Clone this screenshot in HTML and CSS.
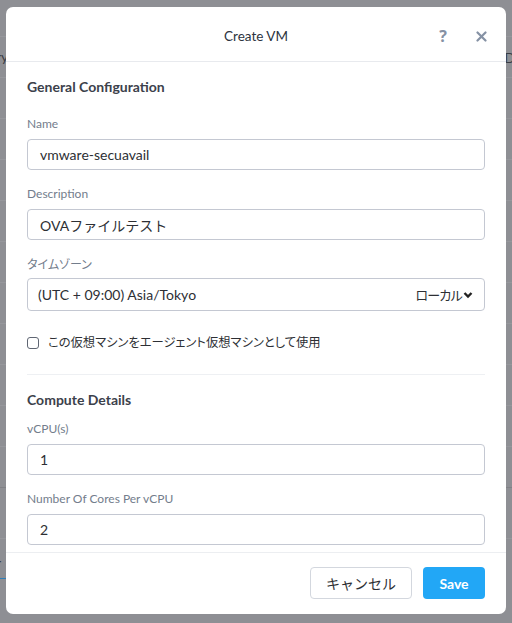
FILE: index.html
```html
<!DOCTYPE html>
<html lang="ja">
<head>
<meta charset="utf-8">
<link rel="stylesheet" href="styles.css">
</head>
<body>
<div class="page">
  <div class="bg-row"><span class="bg-left">ry</span><span class="bg-right">D</span></div>
  <div class="bg-row"></div>
  <div class="bg-row"></div>
  <div class="bg-row"></div>
  <div class="bg-row"></div>
  <div class="bg-row"></div>
  <div class="bg-row"></div>
  <div class="bg-row"></div>
  <div class="bg-row"></div>
  <div class="bg-row"></div>
  <div class="bg-row"></div>
  <div class="bg-row bg-dark bg-tall"></div>
  <div class="bg-row bg-tab"><span class="bg-left">r</span><span class="bg-tabline"></span></div>
</div>

<div class="modal">
  <div class="modal-header">
    <div class="title">Create VM</div>
    <div class="header-icons">
      <span class="icon-help">?</span>
      <svg class="icon-close" width="11" height="11" viewBox="0 0 11 11"><path d="M1.5 1.5 L9.5 9.5 M9.5 1.5 L1.5 9.5" stroke="#8591a4" stroke-width="2.2" stroke-linecap="round"/></svg>
    </div>
  </div>
  <div class="modal-body">
    <div class="section-title first">General Configuration</div>
    <div class="field">
      <div class="label">Name</div>
      <div class="input">vmware-secuavail</div>
    </div>
    <div class="field">
      <div class="label">Description</div>
      <div class="input">OVAファイルテスト</div>
    </div>
    <div class="field tz">
      <div class="label jp">タイムゾーン</div>
      <div class="select">
        <span>(UTC + 09:00) Asia/Tokyo</span>
        <span class="select-right"><span class="jp local">ローカル</span><svg width="10" height="8" viewBox="0 0 10 8"><path d="M1.5 2 L5 5.5 L8.5 2" fill="none" stroke="#222" stroke-width="2.4"/></svg></span>
      </div>
    </div>
    <label class="check-row">
      <span class="checkbox"></span>
      <span class="jp">この仮想マシンをエージェント仮想マシンとして使用</span>
    </label>
    <div class="divider"></div>
    <div class="section-title">Compute Details</div>
    <div class="field">
      <div class="label">vCPU(s)</div>
      <div class="input">1</div>
    </div>
    <div class="field">
      <div class="label">Number Of Cores Per vCPU</div>
      <div class="input">2</div>
    </div>
  </div>
  <div class="modal-footer">
    <button class="btn btn-cancel">キャンセル</button>
    <button class="btn btn-save">Save</button>
  </div>
</div>
</body>
</html>
```

FILE: styles.css
```css
* { box-sizing: border-box; }
html, body { margin: 0; padding: 0; }
body {
  width: 512px;
  height: 623px;
  overflow: hidden;
  background: #8e8f94;
  font-family: Lato, "Noto Sans CJK JP", sans-serif;
  color: #333a44;
}
.page {
  padding-top: 36px;
}
.bg-row {
  height: 41px;
  border-top: 1px solid #96979c;
  display: flex;
  justify-content: space-between;
  align-items: center;
  font-size: 14px;
  color: #3b3d45;
}
.bg-dark { border-top-color: #808186; }
.bg-tall { height: 51px; }
.bg-tab {
  flex-direction: column;
  align-items: flex-start;
  justify-content: flex-start;
  padding-top: 16px;
}
.bg-left { margin-left: -4px; line-height: 16px; }
.bg-right { margin-right: -3px; }
.bg-tabline {
  display: block;
  width: 8px;
  height: 2px;
  background: #2f7fb8;
  margin-top: 7px;
}

.modal {
  position: absolute;
  left: 6px;
  top: 7px;
  width: 500px;
  height: 607px;
  background: #fff;
  border-radius: 7px;
  display: flex;
  flex-direction: column;
  overflow: hidden;
}
.modal-header {
  height: 55px;
  border-bottom: 1px solid #e8eaee;
  display: flex;
  align-items: center;
  justify-content: center;
  position: relative;
  padding-top: 3px;
}
.title {
  font-size: 13.5px;
  color: #2c3340;
}
.header-icons {
  position: absolute;
  right: 19px;
  top: 21px;
  display: flex;
  align-items: center;
  gap: 29px;
}
.icon-help {
  font-family: "Open Sans", sans-serif;
  font-size: 16px;
  font-weight: 700;
  color: #8591a4;
  line-height: 16px;
}
.modal-body {
  flex: 1;
  padding: 17px 21px 0 21px;
  overflow: hidden;
}
.section-title {
  font-size: 14px;
  font-weight: 700;
  color: #3c414b;
  line-height: 16px;
  margin-bottom: 13px;
}
.section-title.first { margin-bottom: 21px; }
.field { margin-bottom: 16px; }
.field.tz { margin-bottom: 21px; }
.label {
  font-size: 12px;
  color: #737d8c;
  line-height: 16px;
  margin-bottom: 7px;
}
.tz .label { margin-bottom: 6px; }
.jp {
  font-family: "Noto Sans CJK JP", sans-serif;
  font-feature-settings: "palt";
}
.input {
  height: 31px;
  border: 1px solid #c4c8d2;
  border-radius: 4px;
  padding: 0 12px;
  display: flex;
  align-items: center;
  font-size: 14px;
  color: #2d2f34;
}
.select {
  height: 33px;
  border: 1px solid #c4c8d2;
  border-radius: 4px;
  padding: 0 11px 0 10px;
  display: flex;
  align-items: center;
  justify-content: space-between;
  font-size: 14px;
  color: #2d2f34;
}
.select-right { display: flex; align-items: center; gap: 1px; }
.local { font-size: 13px; letter-spacing: -0.8px; }
.check-row {
  display: flex;
  align-items: center;
  height: 20px;
  gap: 9px;
  font-size: 12.3px;
  color: #2d2f34;
}
.checkbox {
  width: 12px;
  height: 12px;
  border: 1.5px solid #5f6673;
  border-radius: 3px;
  margin-top: 2px;
}
.divider {
  height: 1px;
  background: #eef0f3;
  margin: 22px 0 17px;
}
.modal-footer {
  height: 62px;
  border-top: 1px solid #eceef1;
  display: flex;
  justify-content: flex-end;
  align-items: flex-start;
  padding: 14px 21px 0 0;
  gap: 11px;
}
.btn {
  height: 32px;
  border-radius: 4px;
  font-size: 14px;
  padding: 0;
}
.btn-cancel {
  width: 102px;
  background: #fff;
  border: 1px solid #d3d7de;
  color: #2d2f34;
  font-family: "Noto Sans CJK JP", sans-serif;
}
.btn-save {
  width: 62px;
  background: #22a7f6;
  border: none;
  color: #fff;
  font-weight: 700;
  font-family: Lato, sans-serif;
}
```
